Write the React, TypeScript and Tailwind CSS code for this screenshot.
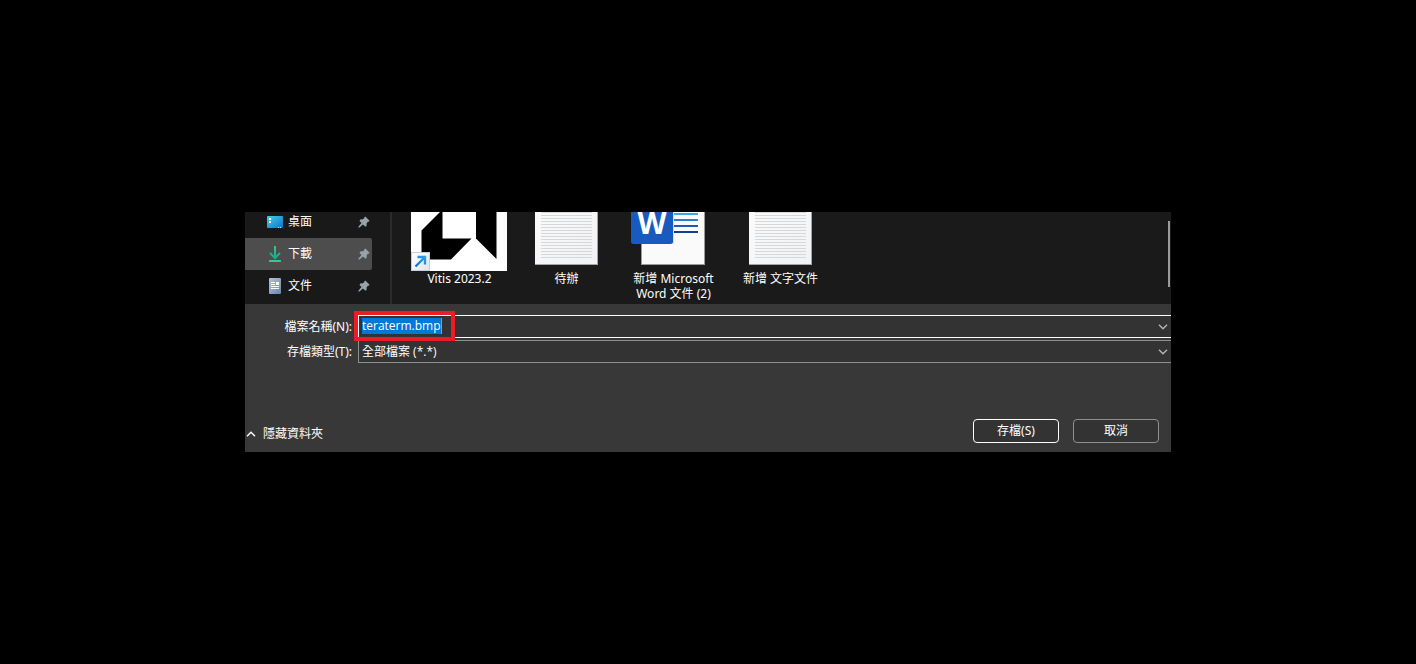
import type { ReactNode } from "react";

function DesktopIcon() {
  return (
    <svg width="16" height="16" viewBox="0 0 16 16" aria-hidden="true">
      <defs>
        <linearGradient id="desk" x1="0" y1="0" x2="1" y2="1">
          <stop offset="0" stopColor="#3fd0e8" />
          <stop offset="1" stopColor="#0f74c8" />
        </linearGradient>
      </defs>
      <rect x="0" y="2" width="16" height="12" rx="1" fill="url(#desk)" />
      <rect x="2" y="4" width="2" height="2" fill="#fff" />
      <rect x="2" y="7" width="2" height="2" fill="#fff" />
      <rect x="11" y="13" width="1" height="1" fill="#bfe6fa" />
      <rect x="13" y="13" width="1" height="1" fill="#bfe6fa" />
    </svg>
  );
}

function DownloadIcon() {
  return (
    <svg width="16" height="16" viewBox="0 0 16 16" fill="none" aria-hidden="true">
      <defs>
        <linearGradient id="down" x1="0" y1="0" x2="0" y2="16" gradientUnits="userSpaceOnUse">
          <stop offset="0" stopColor="#35c98a" />
          <stop offset="0.8" stopColor="#14a893" />
          <stop offset="1" stopColor="#35c98a" />
        </linearGradient>
      </defs>
      <path d="M7 0h2v11h-2z" fill="url(#down)" />
      <path d="M3 7 8 12 13 7" stroke="#1cb08f" strokeWidth="2" />
      <rect x="2" y="14" width="12" height="2" rx="0.500" fill="#35c98a" />
    </svg>
  );
}

function DocumentIcon() {
  return (
    <svg width="16" height="16" viewBox="0 0 16 16" aria-hidden="true">
      <defs>
        <linearGradient id="docu" x1="0" y1="0" x2="1" y2="1">
          <stop offset="0" stopColor="#b3c4d8" />
          <stop offset="1" stopColor="#6a86aa" />
        </linearGradient>
      </defs>
      <rect x="2" y="0" width="12" height="16" rx="1" fill="url(#docu)" />
      <path d="M4 4h4v1h-4zM4 6h4v1h-4zM9 4h3v3h-3zM4 8h8v1h-8zM4 10h8v1h-8z" fill="#fff" />
    </svg>
  );
}

function PinIcon() {
  return (
    <svg width="12" height="12" viewBox="0 0 12 12" aria-hidden="true">
      <path
        d="M6.200 1.400 7.300 0.400 11.600 4.700 10.600 5.800 9.900 5.800 8.700 7.200 8.500 9.900 7.500 10.700 4.900 8.500 1.500 11.600 0.400 11.400 0.500 10.500 3.500 7.100 1.500 4.900 2.200 3.600 4.900 3.300 6.200 2.200Z"
        fill="#98a3aa"
      />
    </svg>
  );
}

function AmdShortcutIcon() {
  return (
    <svg width="97" height="59" viewBox="0 0 97 59" aria-hidden="true">
      <defs>
        <linearGradient id="badge" x1="0" y1="0" x2="1" y2="1">
          <stop offset="0" stopColor="#ffffff" />
          <stop offset="1" stopColor="#dfe5ee" />
        </linearGradient>
        <linearGradient id="arrow" x1="0" y1="1" x2="1" y2="0">
          <stop offset="0" stopColor="#1173cf" />
          <stop offset="1" stopColor="#2ba0ea" />
        </linearGradient>
      </defs>
      <rect width="96" height="59" fill="#fff" />
      <path d="M29 0H31.500V26.500H60.500L40 47.500H10.500V18.500Z" fill="#000" />
      <path d="M65 0H85.500V47L65 26.500Z" fill="#000" />
      <rect x="0.500" y="40.500" width="18" height="18" fill="url(#badge)" stroke="#c9ced6" />
      <path d="M4.500 54.500 13 46M6.500 45H14V52.500" fill="none" stroke="url(#arrow)" strokeWidth="2.400" />
    </svg>
  );
}

const textLines = [0, 3, 6, 9, 12, 15, 18, 21, 24, 27, 30, 33, 36, 39, 42, 45];

function TextFileIcon() {
  return (
    <svg width="97" height="59" viewBox="0 0 97 59" aria-hidden="true">
      <defs>
        <linearGradient id="paper" x1="0" y1="0" x2="1" y2="1">
          <stop offset="0" stopColor="#fbfbfb" />
          <stop offset="1" stopColor="#f1f2f5" />
        </linearGradient>
      </defs>
      <rect x="17" y="-4" width="63" height="57" fill="#a5a5a5" />
      <rect x="17" y="-4" width="62" height="56" fill="url(#paper)" />
      {textLines.map((y) => (
        <rect key={y} x="23" y={y} width="51" height="1" fill="#d6d7d8" />
      ))}
    </svg>
  );
}

function WordFileIcon() {
  return (
    <svg width="97" height="59" viewBox="0 0 97 59" aria-hidden="true">
      <rect x="16" y="-4" width="64" height="57" fill="#9b9b9b" />
      <rect x="17" y="-4" width="62" height="56" fill="#fafafa" />
      <rect x="40" y="1" width="33" height="2" fill="#41a5ee" />
      <rect x="40" y="7" width="33" height="2" fill="#2b7cd3" />
      <rect x="40" y="13" width="33" height="2" fill="#185abd" />
      <rect x="40" y="19" width="33" height="2" fill="#103f91" />
      <rect x="48" y="-4" width="1" height="36" fill="#dcdcdc" />
      <rect x="6" y="-8" width="42" height="40" rx="2.500" fill="#185abd" />
      <text x="27" y="22" textAnchor="middle" fontSize="30" fontWeight="700" fill="#fff" fontFamily="Open Sans, sans-serif">
        W
      </text>
    </svg>
  );
}

function Chevron({ className }: { className?: string }) {
  return (
    <svg width="10" height="6" viewBox="0 0 10 6" fill="none" className={className} aria-hidden="true">
      <path d="M1 0.800 5 4.800 9 0.800" stroke="currentColor" strokeWidth="1.400" />
    </svg>
  );
}

function SidebarItem({ icon, label, active }: { icon: ReactNode; label: string; active?: boolean }) {
  return (
    <li>
      <a
        href="#"
        className={`flex h-8 items-center gap-[5px] rounded-r-xs pr-[2px] pl-[22px] ${active ? "bg-[#4d4d4d]" : ""}`}
      >
        {icon}
        <span className="flex-1">{label}</span>
        <PinIcon />
      </a>
    </li>
  );
}

function FileTile({ icon, children }: { icon: ReactNode; children: ReactNode }) {
  return (
    <li className="flex w-[107px] shrink-0 flex-col items-center text-center leading-[15px]">
      {icon}
      <span>{children}</span>
    </li>
  );
}

export default function App() {
  return (
    <main className="flex min-h-screen items-center justify-center bg-black font-['Noto_Sans','Noto_Sans_CJK_TC',sans-serif] text-[12px] text-white">
      <div className="w-full max-w-[926px] overflow-hidden bg-[#383838]">
        <div className="flex h-[92px] bg-[#191919]">
          <nav className="flex w-[127px] shrink-0 flex-col justify-end overflow-hidden pb-[2px]">
            <ul>
              <SidebarItem icon={<DesktopIcon />} label="桌面" />
              <SidebarItem icon={<DownloadIcon />} label="下載" active />
              <SidebarItem icon={<DocumentIcon />} label="文件" />
            </ul>
          </nav>
          <div className="ml-[18px] w-[2px] shrink-0 bg-[#2b2b2b]" />
          <ul className="flex min-w-0 flex-1 overflow-hidden bg-[#1a1a1a] pl-[14px]">
            <FileTile icon={<AmdShortcutIcon />}>Vitis 2023.2</FileTile>
            <FileTile icon={<TextFileIcon />}>待辦</FileTile>
            <FileTile icon={<WordFileIcon />}>
              新增 Microsoft
              <br />
              Word 文件 (2)
            </FileTile>
            <FileTile icon={<TextFileIcon />}>新增 文字文件</FileTile>
          </ul>
          <div className="flex w-[11px] shrink-0 justify-end pt-[9px] pr-px">
            <div className="h-[66px] w-[2px] bg-[#9a9a9a]" />
          </div>
        </div>

        <form className="pt-[11px]" onSubmit={(e) => e.preventDefault()}>
          <div className="grid grid-cols-[107px_1fr] gap-x-[6px] gap-y-[2px]">
            <label htmlFor="name" className="self-center text-right">
              檔案名稱(N):
            </label>
            <div className="relative flex h-[23px] items-center border border-r-0 border-white bg-[#333333] pl-[3px]">
              <input
                id="name"
                type="text"
                defaultValue="teraterm.bmp"
                className="mb-[2px] h-4 w-[80px] border-r border-[#f08030] bg-[#0078d7] font-['Open_Sans','Noto_Sans_CJK_TC',sans-serif] text-[12px] leading-4 outline-none"
              />
              <button type="button" aria-label="檔案名稱" className="ml-auto flex h-full w-[17px] items-center justify-center text-[#b5b5b5]">
                <Chevron />
              </button>
              <div className="pointer-events-none absolute -top-[5px] -left-[5px] z-10 h-[30px] w-[101px] border-4 border-[#ed1c24]" />
            </div>
            <label htmlFor="type" className="self-center text-right">
              存檔類型(T):
            </label>
            <div className="relative">
              <select
                id="type"
                className="block h-[23px] w-full appearance-none border border-r-0 border-[#8f8f8f] bg-[#333333] pl-[3px] font-['Open_Sans','Noto_Sans_CJK_TC',sans-serif] outline-none"
              >
                <option>全部檔案 (*.*)</option>
              </select>
              <Chevron className="pointer-events-none absolute top-[9px] right-[3px] text-[#b5b5b5]" />
            </div>
          </div>

          <div className="mt-14 flex items-center gap-[14px] pr-3 pb-[9px]">
            <button type="button" className="mr-auto flex items-center gap-[7px] pt-[5px] pl-px">
              <Chevron className="rotate-180" />
              隱藏資料夾
            </button>
            <button type="submit" className="h-6 w-[86px] rounded border border-white bg-[#333333]">
              存檔(S)
            </button>
            <button type="button" className="h-6 w-[86px] rounded border border-[#8f8f8f] bg-[#333333]">
              取消
            </button>
          </div>
        </form>
      </div>
    </main>
  );
}
